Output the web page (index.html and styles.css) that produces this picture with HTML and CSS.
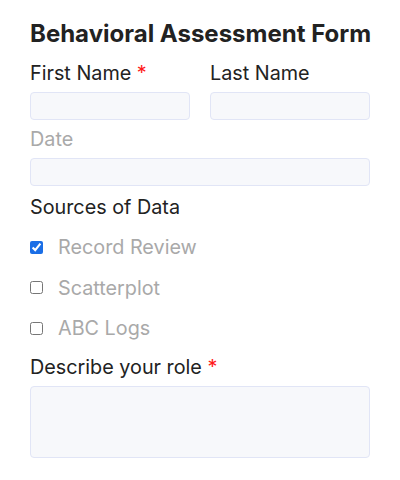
FILE: index.html
```html
<!DOCTYPE html>
<html lang="en">
<head>
<meta charset="utf-8">
<title>Behavioral Assessment Form</title>
<link rel="stylesheet" href="styles.css">
</head>
<body>
<form class="form">
  <h1 class="title">Behavioral Assessment Form</h1>
  <div class="row">
    <div class="field">
      <label class="label">First Name <span class="req">*</span></label>
      <input class="input" type="text">
    </div>
    <div class="field">
      <label class="label">Last Name</label>
      <input class="input" type="text">
    </div>
  </div>
  <div class="field date-field">
    <label class="label muted">Date</label>
    <input class="input" type="text">
  </div>
  <div class="sources">
    <div class="label">Sources of Data</div>
    <div class="checks">
      <label class="check"><input type="checkbox" class="cb" checked><span>Record Review</span></label>
      <label class="check"><input type="checkbox" class="cb"><span>Scatterplot</span></label>
      <label class="check"><input type="checkbox" class="cb"><span>ABC Logs</span></label>
    </div>
  </div>
  <div class="field role-field">
    <label class="label">Describe your role <span class="req">*</span></label>
    <textarea class="input area"></textarea>
  </div>
</form>
</body>
</html>
```
FILE: styles.css
```css
html, body {
  margin: 0;
  background: #ffffff;
}
body {
  font-family: Inter, "Noto Sans", sans-serif;
  color: #222222;
  padding: 19px 30px;
}
.form {
  width: 340px;
  display: flex;
  flex-direction: column;
}
.title {
  margin: 0;
  font-size: 24px;
  font-weight: 700;
  line-height: 29px;
  color: #222222;
  white-space: nowrap;
}
.row {
  display: flex;
  gap: 20px;
  margin-top: 12.5px;
}
.row .field {
  flex: 1 1 0;
  min-width: 0;
}
.field {
  display: flex;
  flex-direction: column;
}
.label {
  font-size: 19.8px;
  line-height: 24px;
  color: #222222;
  margin-bottom: 7.5px;
}
.muted {
  color: #a9a9a9;
}
.req {
  color: #ff1a1a;
}
.input {
  box-sizing: border-box;
  width: 100%;
  min-width: 0;
  height: 28px;
  margin: 0;
  border: 1px solid #e1e5f6;
  border-radius: 4px;
  background: #f7f8fb;
  font: inherit;
  outline: none;
}
.date-field {
  margin-top: 6.5px;
}
.sources {
  margin-top: 9px;
}
.sources .label {
  margin-bottom: 0;
}
.checks {
  display: flex;
  flex-direction: column;
  gap: 16.5px;
  margin-top: 16px;
}
.check {
  display: flex;
  align-items: center;
  height: 24px;
  font-size: 19.8px;
  line-height: 24px;
  color: #a9a9a9;
}
.cb {
  width: 13px;
  height: 13px;
  margin: 0 15px 0 0;
  flex: none;
  accent-color: #1a6ee6;
}
.role-field {
  margin-top: 14.5px;
}
.area {
  height: 72px;
  resize: none;
}
```
